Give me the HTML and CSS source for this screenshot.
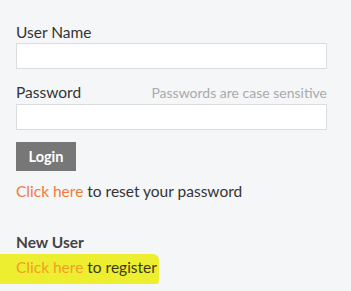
FILE: index.html
```html
<!DOCTYPE html>
<html lang="en">
<head>
  <meta charset="UTF-8">
  <title>Login</title>
  <link rel="stylesheet" href="styles.css">
</head>
<body>
  <form class="login">
    <label class="field">
      <span class="field-head">User Name</span>
      <input type="text" class="box">
    </label>
    <label class="field">
      <span class="field-head">Password <small class="hint">Passwords are case sensitive</small></span>
      <input type="password" class="box">
    </label>
    <button type="button" class="btn">Login</button>
    <p class="line"><a href="#" class="link">Click here</a> to reset your password</p>
  </form>

  <div class="new-user">
    <h4>New User</h4>
    <p class="line marked"><a href="#" class="link">Click here</a> to register</p>
  </div>
</body>
</html>
```

FILE: styles.css
```css
body {
  margin: 0;
  padding: 21px 24px 0 16px;
  background: #f5f6f8;
  font-family: Lato, "Liberation Sans", sans-serif;
  color: #333;
  font-size: 15.5px;
}

.login {
  display: flex;
  flex-direction: column;
  align-items: flex-start;
}

.field {
  display: flex;
  flex-direction: column;
  width: 100%;
  margin-bottom: 12px;
}

.field-head {
  display: flex;
  justify-content: space-between;
  align-items: baseline;
  line-height: 22px;
}

.hint {
  font-size: 14px;
  color: #aaa;
}

.box {
  box-sizing: border-box;
  width: 100%;
  height: 26px;
  margin: 0;
  border: 1px solid #dcdcdc;
  background: #fff;
}

.btn {
  width: 60px;
  height: 29px;
  border: none;
  background: #777;
  color: #fff;
  font-family: inherit;
  font-size: 14.5px;
  font-weight: bold;
}

.line {
  margin: 10px 0 0;
  line-height: 20px;
}

.link {
  color: #f07a3e;
  text-decoration: none;
}

.new-user h4 {
  margin: 32px 0 3px;
  font-size: 15.5px;
  color: #444;
}

.marked {
  margin: 0 0 0 -16px;
  padding: 3px 2px 7px 16px;
  width: fit-content;
  background: #eeee30;
  border-radius: 0 6px 3px 0;
  color: #3a3a10;
}

.marked .link {
  color: #f0a024;
}
```
